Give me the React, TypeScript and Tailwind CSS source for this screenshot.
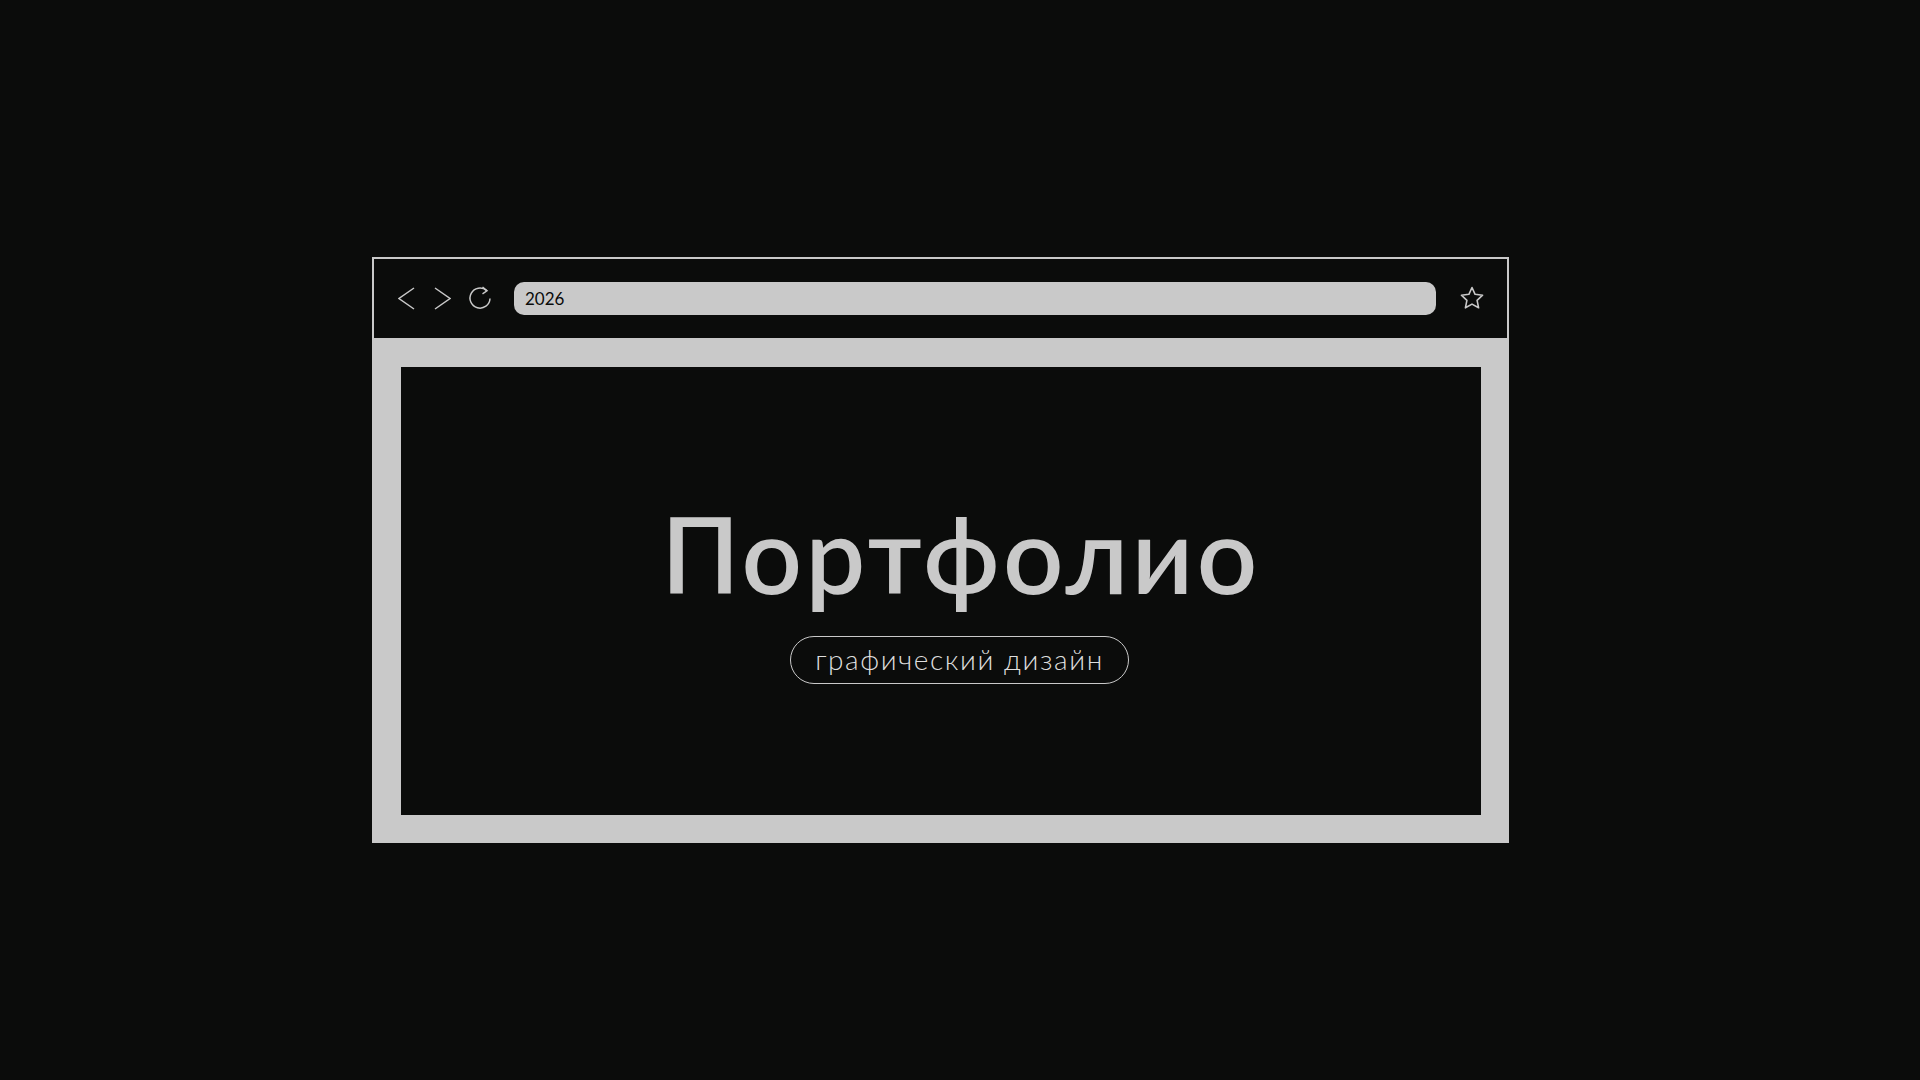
// ── Icons ──────────────────────────────────────────────────────────────────────

function ChevronIcon({ flip }: { flip?: boolean }) {
  return (
    <svg width="17" height="23" viewBox="0 0 17 23" fill="none" stroke="#c9c9c9" strokeWidth="1.5">
      <path d={flip ? "M1 1 L16 11.5 L1 22" : "M16 1 L1 11.5 L16 22"} />
    </svg>
  );
}

function ReloadIcon() {
  return (
    <svg width="24" height="24" viewBox="0 0 24 24" fill="none" stroke="#c9c9c9" strokeWidth="1.5">
      <path d="M18.6 4.6 A10 10 0 1 0 22 12.5" />
      <path d="M14.5 1 L19 4.8 L14.5 7.8" />
    </svg>
  );
}

function StarIcon() {
  return (
    <svg width="26" height="26" viewBox="0 0 26 26" fill="none" stroke="#c9c9c9" strokeWidth="1.6" strokeLinejoin="round">
      <path d="M13 2.5 L16.1 9.3 L23.6 10.2 L18.1 15.3 L19.6 22.8 L13 19.1 L6.4 22.8 L7.9 15.3 L2.4 10.2 L9.9 9.3 Z" />
    </svg>
  );
}

// ── Main page ──────────────────────────────────────────────────────────────────

export default function App() {
  return (
    <div className="min-h-screen bg-[#0b0c0b] pt-[257px] pl-[372px] font-['Lato',sans-serif] text-[#c9c9c9] antialiased">
      <div className="w-[1137px]">
        {/* Browser bar */}
        <div className="flex h-[81px] items-center border-x-2 border-t-2 border-[#c9c9c9] pl-[24px]">
          <ChevronIcon />
          <div className="ml-[19px]">
            <ChevronIcon flip />
          </div>
          <div className="ml-[17px] mb-[2px]">
            <ReloadIcon />
          </div>
          <div className="ml-[22px] flex h-[33px] w-[922px] items-center rounded-[10px] bg-[#c9c9c9] pl-[11px] text-[17px] text-[#0b0c0b]">
            2026
          </div>
          <div className="ml-[23px] mb-[2px]">
            <StarIcon />
          </div>
        </div>

        {/* Page body */}
        <div className="flex h-[505px] flex-col items-center border-[28px] border-t-[29px] border-l-[29px] border-[#c9c9c9] pt-[133px] pl-[40px]">
          <h1 className="text-[106px] font-semibold leading-[1] tracking-[3.5px]">Портфолио</h1>
          <div className="mt-[30px] mr-[3px] flex h-[48px] w-[339px] items-center justify-center rounded-[24px] border border-[#c9c9c9] pb-[2px] text-[28px] font-light tracking-[1.6px] text-[#dedede]">
            графический дизайн
          </div>
        </div>
      </div>
    </div>
  );
}
